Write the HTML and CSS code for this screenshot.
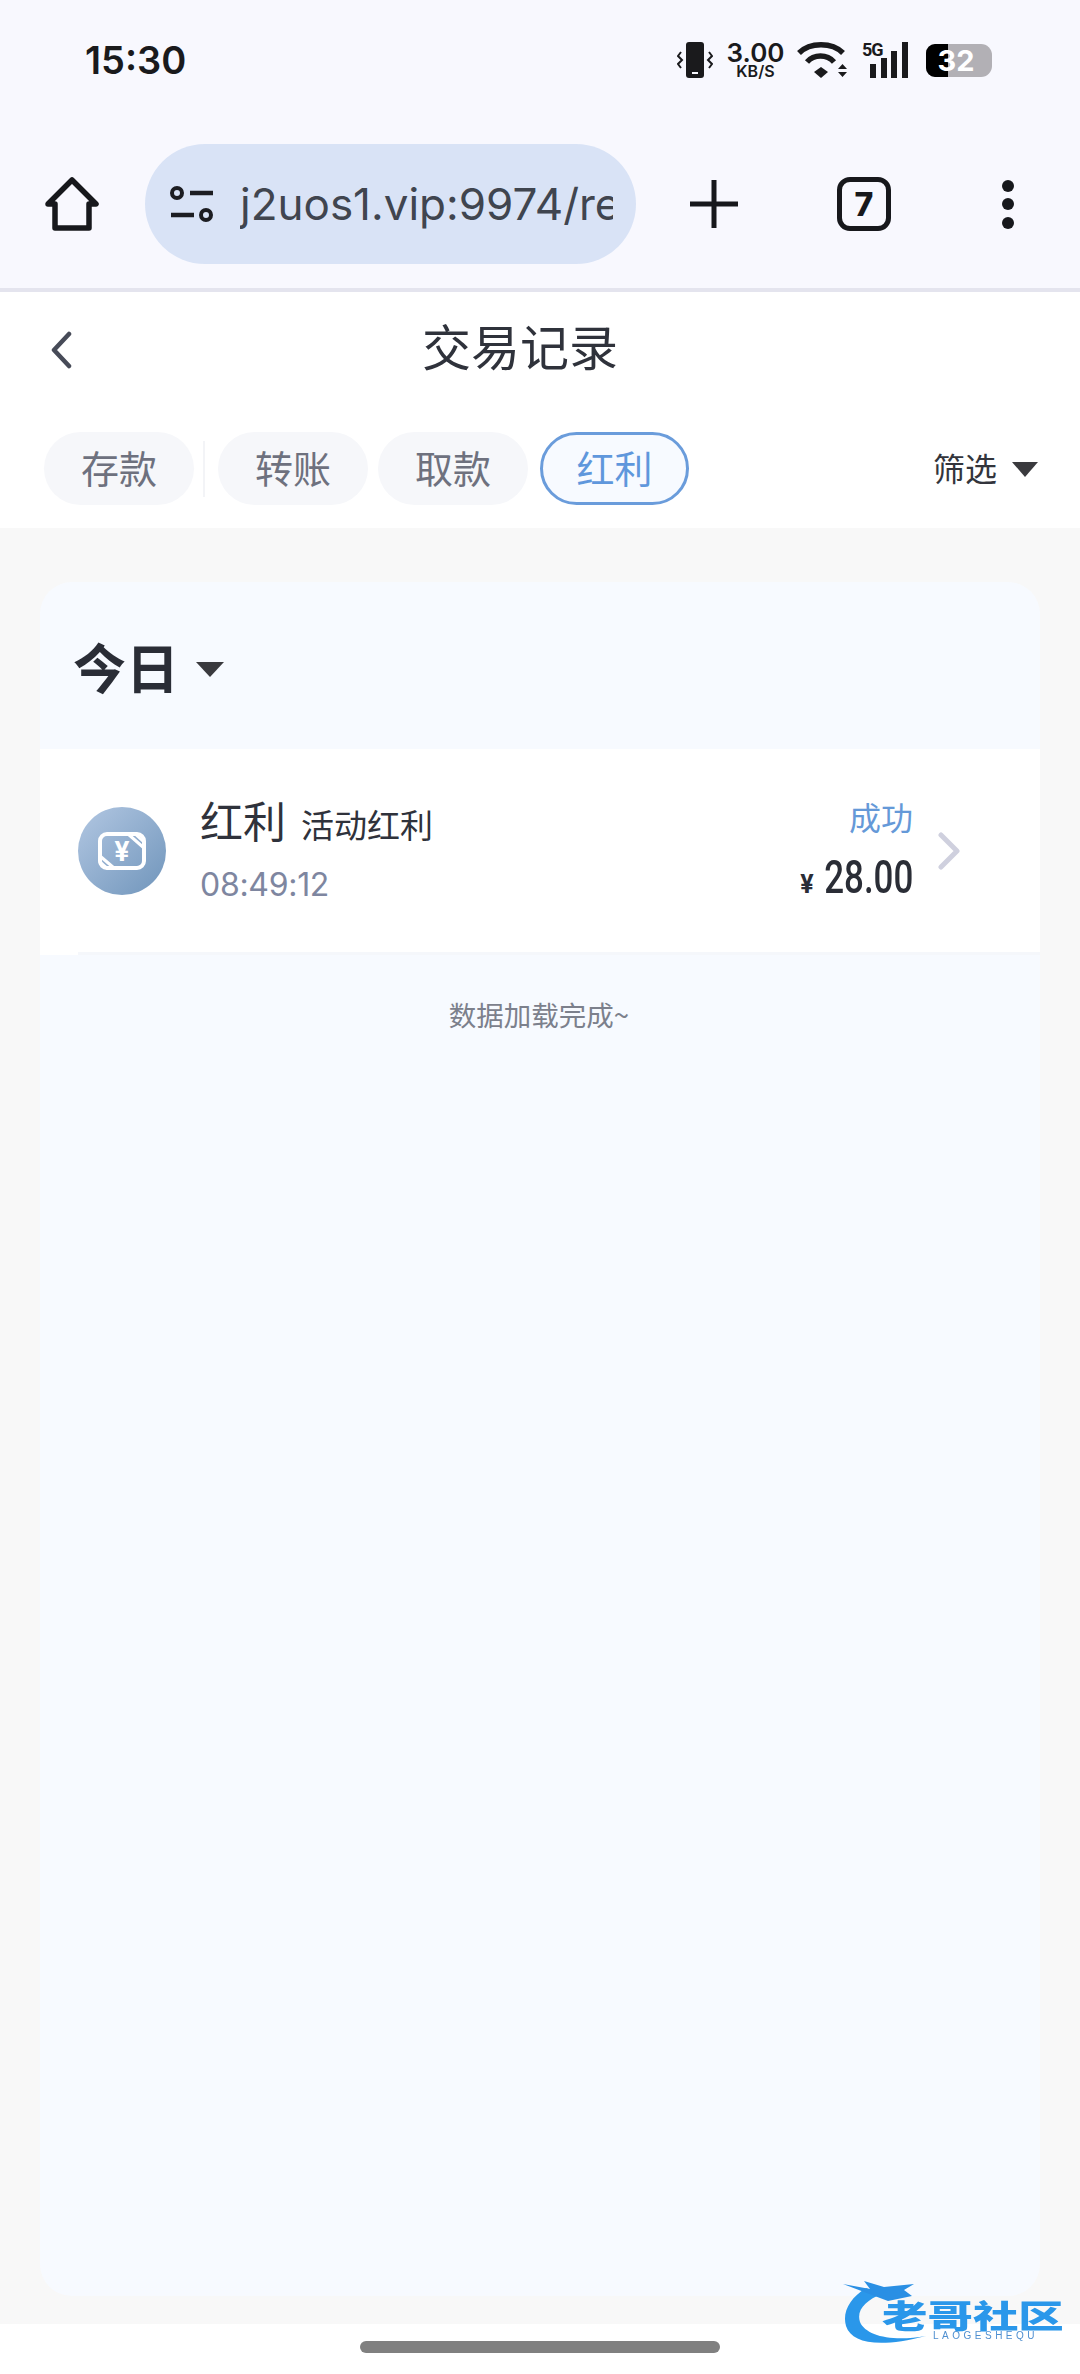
FILE: index.html
```html
<!DOCTYPE html>
<html lang="zh-CN">
<head>
    <meta charset="UTF-8">
    <meta name="viewport" content="width=device-width, initial-scale=1.0">
    <title>交易记录</title>
    <link rel="stylesheet" href="styles.css">
</head>
<body>
    <div class="browser">
        <div class="status-bar">
            <span class="clock">15:30</span>
            <div class="status-icons">
                <svg class="ic-vibrate" viewBox="0 0 36 36">
                    <rect x="9" y="0" width="18" height="36" rx="3" fill="#1a1a1c"/>
                    <rect x="15" y="30" width="6" height="2" fill="#f8f8fe"/>
                    <path d="M4 10 L1 14 L5 18 L1 22 L4 26 M32 10 L35 14 L31 18 L35 22 L32 26" fill="none" stroke="#1a1a1c" stroke-width="2"/>
                </svg>
                <div class="net-speed"><span class="speed-num">3.00</span><span class="speed-unit">KB/S</span></div>
                <svg class="ic-wifi" viewBox="0 0 50 36">
                    <path d="M2 11 C13 0 35 0 46 11" fill="none" stroke="#1a1a1c" stroke-width="5.500"/>
                    <path d="M10 20 C17 12 30 12 37 20" fill="none" stroke="#1a1a1c" stroke-width="5.500"/>
                    <path d="M17 30 L24 25 L31 30 L24 36 Z" fill="#1a1a1c"/>
                    <path d="M41 27 L45.500 22 L50 27 Z M41 30 L50 30 L45.500 35 Z" fill="#1a1a1c"/>
                </svg>
                <div class="signal">
                    <span class="five-g">5G</span>
                    <svg class="ic-bars" viewBox="0 0 38 36">
                        <rect x="0" y="22" width="6" height="14" fill="#1a1a1c"/>
                        <rect x="11" y="16" width="6" height="20" fill="#1a1a1c"/>
                        <rect x="21" y="9" width="6" height="27" fill="#1a1a1c"/>
                        <rect x="32" y="0" width="6" height="36" fill="#1a1a1c"/>
                    </svg>
                </div>
                <div class="battery"><span class="battery-fill"></span><span class="battery-num">32</span></div>
            </div>
        </div>
        <div class="toolbar">
            <svg class="ic-home" viewBox="0 0 54 54">
                <path d="M27 3 L51 27 L44 27 L44 51 L10 51 L10 27 L3 27 Z" fill="none" stroke="#17181c" stroke-width="5.500" stroke-linejoin="round"/>
            </svg>
            <div class="url-pill">
                <svg class="ic-tune" viewBox="0 0 44 36">
                    <circle cx="7" cy="7" r="5" fill="none" stroke="#1c1d22" stroke-width="4"/>
                    <path d="M20 7 H43 M1 29 H24" stroke="#1c1d22" stroke-width="4.500"/>
                    <circle cx="36" cy="29" r="5" fill="none" stroke="#1c1d22" stroke-width="4"/>
                </svg>
                <div class="url-text">j2uos1.vip:9974/re</div>
            </div>
            <svg class="ic-plus" viewBox="0 0 48 48">
                <path d="M24 0 V48 M0 24 H48" stroke="#17181c" stroke-width="5"/>
            </svg>
            <div class="tab-count">7</div>
            <div class="dots"><span></span><span></span><span></span></div>
        </div>
    </div>

    <div class="page-head">
        <div class="title-row">
            <svg class="ic-back" viewBox="0 0 22 38">
                <path d="M19 3 L4 19 L19 35" fill="none" stroke="#474b58" stroke-width="4.500" stroke-linecap="round" stroke-linejoin="round"/>
            </svg>
            <h1 class="page-title">交易记录</h1>
        </div>
        <div class="tabs-row">
            <div class="tab">存款</div>
            <div class="tab-sep"></div>
            <div class="tab">转账</div>
            <div class="tab tab-gap">取款</div>
            <div class="tab tab-active">红利</div>
            <div class="filter">筛选<span class="arrow-down filter-arrow"></span></div>
        </div>
    </div>

    <main class="content">
        <section class="card">
            <div class="card-head">今日<span class="arrow-down day-arrow"></span></div>
            <div class="record">
                <div class="record-inner">
                    <svg class="record-icon" viewBox="0 0 88 88">
                        <defs>
                            <linearGradient id="iconBg" x1="0" y1="0" x2="1" y2="1">
                                <stop offset="0" stop-color="#b2c7e2"/>
                                <stop offset="1" stop-color="#7095bb"/>
                            </linearGradient>
                        </defs>
                        <circle cx="44" cy="44" r="44" fill="url(#iconBg)"/>
                        <rect x="22" y="27" width="44" height="34" rx="7" fill="none" stroke="#fff" stroke-width="4"/>
                        <path d="M50 27 L66 41 M56 26 L67 36 M22 49 L36 61 M21 54 L30 62" stroke="#fff" stroke-width="3"/>
                        <text class="yen-mark" x="44" y="54" text-anchor="middle">¥</text>
                    </svg>
                    <div class="record-info">
                        <div class="record-name">红利<span class="record-sub">活动红利</span></div>
                        <div class="record-time">08:49:12</div>
                    </div>
                    <div class="record-side">
                        <div class="record-status">成功</div>
                        <div class="record-amount"><span class="amount-yen">¥</span><span class="amount-num">28.00</span></div>
                    </div>
                    <svg class="ic-next" viewBox="0 0 22 38">
                        <path d="M3 3 L19 19 L3 35" fill="none" stroke="#cfd0de" stroke-width="5" stroke-linecap="round" stroke-linejoin="round"/>
                    </svg>
                </div>
            </div>
            <p class="load-done">数据加载完成~</p>
        </section>
    </main>

    <div class="home-bar"><span class="home-pill"></span></div>

    <div class="watermark">
        <svg class="wm-dragon" viewBox="0 0 150 70">
            <path d="M24 8 C8 18 0 32 4 46 C10 64 38 68 84 56 C50 62 24 56 18 42 C14 30 24 20 40 14 Z" fill="#2a97ea"/>
            <path d="M1 4 L28 9 L22 1 L42 7 L72 4 L62 10 L70 16 L46 21 L30 15 Z" fill="#2a8fe4"/>
        </svg>
        <span class="wm-name">老哥社区</span>
        <span class="wm-latin">LAOGESHEQU</span>
    </div>
</body>
</html>
```

FILE: styles.css
```css
* {
    box-sizing: border-box;
}
html, body {
    margin: 0;
    padding: 0;
}
body {
    position: relative;
    display: flex;
    flex-direction: column;
    height: 100vh;
    overflow: hidden;
    background-color: #fff;
    font-family: "Noto Sans CJK SC", "Noto Sans", sans-serif;
    color: #2f323b;
}

/* browser chrome */
.browser {
    height: 292px;
    background-color: #f8f8fe;
    border-bottom: 4px solid #e4e4ee;
}
.status-bar {
    display: flex;
    align-items: center;
    justify-content: space-between;
    height: 120px;
    padding: 0 88px 0 85px;
}
.clock {
    font-family: Inter, Roboto, sans-serif;
    font-size: 38px;
    font-weight: 600;
    color: #1a1a1c;
}
.status-icons {
    display: flex;
    align-items: center;
}
.ic-vibrate {
    width: 36px;
    height: 36px;
    margin-right: 14px;
}
.net-speed {
    display: flex;
    flex-direction: column;
    align-items: center;
    width: 57px;
    margin-right: 13px;
    color: #1a1a1c;
    font-family: Inter, sans-serif;
    font-weight: 600;
}
.speed-num {
    font-size: 26px;
    line-height: 22px;
}
.speed-unit {
    font-size: 16px;
    line-height: 15px;
}
.ic-wifi {
    width: 50px;
    height: 36px;
    margin-right: 15px;
}
.signal {
    position: relative;
    width: 46px;
    height: 36px;
    margin-right: 18px;
}
.five-g {
    position: absolute;
    top: -1px;
    left: 0;
    font-family: Roboto, sans-serif;
    font-size: 18px;
    line-height: 18px;
    font-weight: 700;
    letter-spacing: -1px;
    color: #1a1a1c;
}
.ic-bars {
    position: absolute;
    right: 0;
    top: 0;
    width: 38px;
    height: 36px;
}
.battery {
    position: relative;
    display: flex;
    justify-content: center;
    align-items: center;
    width: 66px;
    height: 33px;
    overflow: hidden;
    background-color: #b2b0b5;
    border-radius: 9px 11px 11px 9px;
}
.battery-fill {
    position: absolute;
    left: 0;
    top: 0;
    bottom: 0;
    width: 22px;
    background-color: #000;
}
.battery-num {
    position: relative;
    margin-right: 6px;
    font-family: Inter, sans-serif;
    font-size: 29px;
    font-weight: 700;
    color: #fff;
}

.toolbar {
    display: flex;
    align-items: center;
    height: 168px;
    padding-left: 45px;
}
.ic-home {
    width: 54px;
    height: 54px;
}
.url-pill {
    display: flex;
    align-items: center;
    width: 491px;
    height: 120px;
    margin-left: 46px;
    padding-left: 25px;
    background-color: #d9e3f6;
    border-radius: 60px;
}
.ic-tune {
    flex: none;
    width: 44px;
    height: 36px;
}
.url-text {
    width: 373px;
    margin-left: 26px;
    overflow: hidden;
    white-space: nowrap;
    font-family: Inter, Roboto, sans-serif;
    font-size: 44px;
    color: #40454f;
}
.ic-plus {
    width: 48px;
    height: 48px;
    margin-left: 54px;
}
.tab-count {
    display: flex;
    align-items: center;
    justify-content: center;
    width: 54px;
    height: 54px;
    margin-left: 99px;
    border: 5px solid #17181c;
    border-radius: 13px;
    font-family: Inter, sans-serif;
    font-size: 32px;
    font-weight: 800;
    color: #17181c;
}
.dots {
    display: flex;
    flex-direction: column;
    justify-content: space-between;
    height: 49px;
    margin-left: 111px;
}
.dots span {
    display: block;
    width: 12px;
    height: 12px;
    background-color: #17181c;
    border-radius: 50%;
}

/* page head */
.page-head {
    height: 236px;
    background-color: #fff;
}
.title-row {
    display: flex;
    align-items: center;
    height: 110px;
    padding-left: 50px;
}
.ic-back {
    width: 22px;
    height: 38px;
    margin-top: 6px;
}
.page-title {
    margin: 0 0 4px 350px;
    font-size: 49px;
    line-height: 60px;
    font-weight: 400;
    color: #2f323b;
}
.tabs-row {
    display: flex;
    align-items: center;
    height: 73px;
    margin-top: 30px;
    padding-left: 44px;
}
.tab {
    display: flex;
    align-items: center;
    justify-content: center;
    width: 150px;
    height: 73px;
    padding-bottom: 5px;
    background-color: #f6f7fa;
    border-radius: 37px;
    font-size: 38px;
    color: #6e717e;
}
.tab-sep {
    width: 2px;
    height: 56px;
    margin: 0 13px 0 9px;
    background-color: #f3f4f7;
}
.tab-gap {
    margin-left: 10px;
}
.tab-active {
    width: 149px;
    margin-left: 12px;
    background-color: #f7faff;
    border: 3px solid #6a9cdb;
    color: #5f97dc;
}
.filter {
    display: flex;
    align-items: center;
    margin-left: auto;
    padding-right: 42px;
    padding-bottom: 3px;
    font-size: 32px;
    color: #33353c;
}
.arrow-down {
    display: inline-block;
    width: 0;
    height: 0;
    border-style: solid;
    border-color: #3a3a3e transparent transparent transparent;
}
.filter-arrow {
    margin: 4px 0 0 15px;
    border-width: 15px 13px 0 13px;
}

/* list */
.content {
    flex: 1;
    display: flex;
    flex-direction: column;
    padding: 54px 40px 28px;
    background-color: #f8f8f8;
}
.card {
    flex: 1;
    background-color: #f7faff;
    border-radius: 32px;
}
.card-head {
    display: flex;
    align-items: center;
    height: 167px;
    padding-left: 33px;
    font-size: 53px;
    font-weight: 600;
    color: #2a2d36;
}
.day-arrow {
    margin: 8px 0 0 17px;
    border-width: 15px 14px 0 14px;
}
.record {
    padding-left: 38px;
    background-color: #fff;
}
.record-inner {
    display: flex;
    align-items: center;
    height: 206px;
    padding-right: 80px;
    border-bottom: 3px solid #f5f7fb;
}
.record-icon {
    flex: none;
    width: 88px;
    height: 88px;
}
.yen-mark {
    font-family: Inter, sans-serif;
    font-size: 27px;
    font-weight: 700;
    fill: #fff;
}
.record-info {
    flex: 1;
    margin-left: 34px;
    padding-bottom: 5px;
}
.record-name {
    font-size: 43px;
    line-height: 56px;
    color: #2f323b;
}
.record-sub {
    margin-left: 15px;
    font-size: 33px;
}
.record-time {
    margin-top: 13px;
    font-family: Inter, Roboto, sans-serif;
    font-size: 32px;
    line-height: 40px;
    letter-spacing: -0.3px;
    color: #7e86a0;
}
.record-side {
    text-align: right;
}
.record-status {
    font-size: 32px;
    line-height: 46px;
    color: #6599d8;
}
.record-amount {
    margin-top: 15px;
    font-family: Roboto, sans-serif;
    font-size: 46px;
    font-weight: 500;
    line-height: 46px;
    color: #2a2d36;
}
.amount-yen {
    position: relative;
    margin-right: -18px;
    font-size: 25px;
    font-weight: 700;
}
.amount-num {
    display: inline-block;
    transform: scaleX(0.76);
    transform-origin: right center;
}
.ic-next {
    width: 22px;
    height: 38px;
    margin: 0 0 0 25px;
}
.load-done {
    margin: 39px 0 0;
    padding-right: 2px;
    text-align: center;
    font-size: 27.500px;
    line-height: 40px;
    color: #7c808c;
}

.home-bar {
    height: 50px;
    padding-top: 17px;
    background-color: #fff;
}
.home-pill {
    display: block;
    width: 360px;
    height: 12px;
    margin: 0 auto;
    background-color: #808080;
    border-radius: 6px;
}

/* watermark lies over the page */
.watermark {
    position: absolute;
    left: 842px;
    top: 2280px;
    width: 222px;
    height: 70px;
    filter: blur(0.5px);
}
.wm-dragon {
    position: absolute;
    left: 0;
    top: 0;
    width: 150px;
    height: 70px;
}
.wm-name {
    position: absolute;
    left: 40px;
    top: 20px;
    width: 130px;
    font-size: 32px;
    line-height: 28px;
    font-weight: 900;
    white-space: nowrap;
    color: #2a97ea;
    transform: scaleX(1.42);
    transform-origin: left center;
}
.wm-latin {
    position: absolute;
    left: 91px;
    top: 50px;
    font-family: "Liberation Sans", sans-serif;
    font-size: 10px;
    line-height: 11px;
    letter-spacing: 3.500px;
    color: #4f8fd0;
}
```
